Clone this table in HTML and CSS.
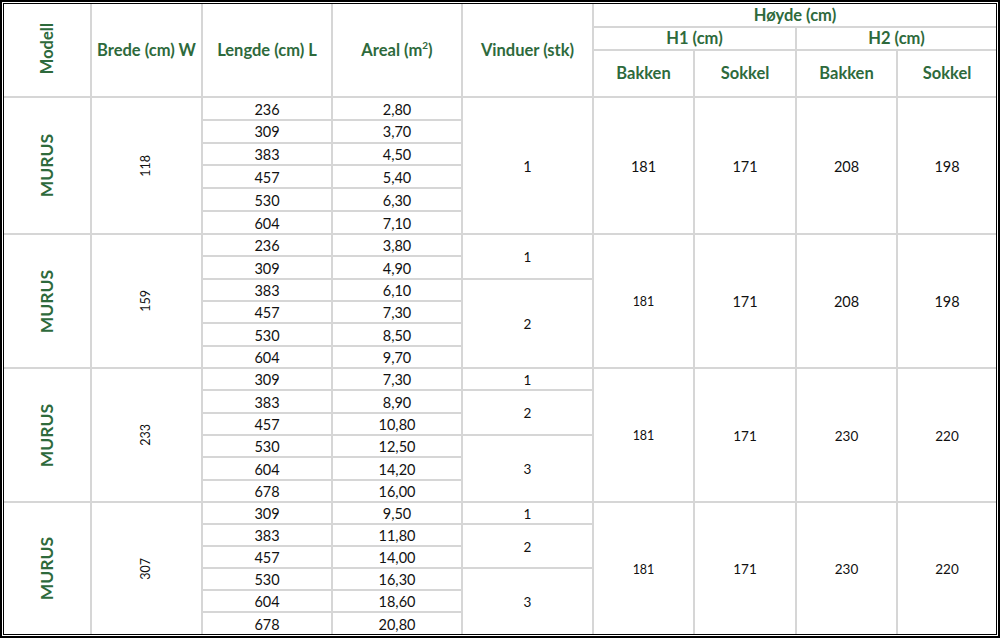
FILE: index.html
```html
<!DOCTYPE html>
<html lang="no">
<head>
<meta charset="utf-8">
<title>MURUS</title>
<link rel="stylesheet" href="styles.css">
</head>
<body>
<div class="frame">
<div class="inner">
<table class="spec">
<colgroup>
<col class="c1"><col class="c2"><col class="c3"><col class="c4"><col class="c5"><col class="c6"><col class="c7"><col class="c8"><col class="c9">
</colgroup>
<thead>
<tr class="hr1">
<th rowspan="3"><span class="rot">Modell</span></th>
<th rowspan="3">Brede (cm) W</th>
<th rowspan="3">Lengde (cm) L</th>
<th rowspan="3">Areal (m<sup>2</sup>)</th>
<th rowspan="3">Vinduer (stk)</th>
<th colspan="4">Høyde (cm)</th>
</tr>
<tr class="hr2">
<th colspan="2">H1 (cm)</th>
<th colspan="2">H2 (cm)</th>
</tr>
<tr class="hr3">
<th>Bakken</th><th>Sokkel</th><th>Bakken</th><th>Sokkel</th>
</tr>
</thead>
<tbody class="g1">
<tr>
<td rowspan="6" class="model"><span class="rot">MURUS</span></td>
<td rowspan="6" class="sm"><span class="rot">118</span></td>
<td>236</td><td>2,80</td>
<td rowspan="6">1</td>
<td rowspan="6">181</td><td rowspan="6">171</td><td rowspan="6">208</td><td rowspan="6">198</td>
</tr>
<tr><td>309</td><td>3,70</td></tr>
<tr><td>383</td><td>4,50</td></tr>
<tr><td>457</td><td>5,40</td></tr>
<tr><td>530</td><td>6,30</td></tr>
<tr><td>604</td><td>7,10</td></tr>
</tbody>
<tbody class="g2">
<tr>
<td rowspan="6" class="model"><span class="rot">MURUS</span></td>
<td rowspan="6" class="sm"><span class="rot">159</span></td>
<td>236</td><td>3,80</td>
<td rowspan="2" class="md">1</td>
<td rowspan="6" class="sm">181</td><td rowspan="6">171</td><td rowspan="6">208</td><td rowspan="6">198</td>
</tr>
<tr><td>309</td><td>4,90</td></tr>
<tr><td>383</td><td>6,10</td><td rowspan="4" class="md">2</td></tr>
<tr><td>457</td><td>7,30</td></tr>
<tr><td>530</td><td>8,50</td></tr>
<tr><td>604</td><td>9,70</td></tr>
</tbody>
<tbody class="g3">
<tr>
<td rowspan="6" class="model"><span class="rot">MURUS</span></td>
<td rowspan="6" class="sm"><span class="rot">233</span></td>
<td>309</td><td>7,30</td>
<td class="md">1</td>
<td rowspan="6" class="sm">181</td><td rowspan="6" class="md">171</td><td rowspan="6" class="md">230</td><td rowspan="6" class="md">220</td>
</tr>
<tr><td>383</td><td>8,90</td><td rowspan="2" class="md">2</td></tr>
<tr><td>457</td><td>10,80</td></tr>
<tr><td>530</td><td>12,50</td><td rowspan="3" class="md">3</td></tr>
<tr><td>604</td><td>14,20</td></tr>
<tr><td>678</td><td>16,00</td></tr>
</tbody>
<tbody class="g4">
<tr>
<td rowspan="6" class="model"><span class="rot">MURUS</span></td>
<td rowspan="6" class="sm"><span class="rot">307</span></td>
<td>309</td><td>9,50</td>
<td class="md">1</td>
<td rowspan="6" class="sm">181</td><td rowspan="6" class="md">171</td><td rowspan="6" class="md">230</td><td rowspan="6" class="md">220</td>
</tr>
<tr><td>383</td><td>11,80</td><td rowspan="2" class="md">2</td></tr>
<tr><td>457</td><td>14,00</td></tr>
<tr><td>530</td><td>16,30</td><td rowspan="3" class="md">3</td></tr>
<tr><td>604</td><td>18,60</td></tr>
<tr><td>678</td><td>20,80</td></tr>
</tbody>
</table>
</div>
</div>
</body>
</html>
```
FILE: styles.css
```css
html, body {
  margin: 0;
  padding: 0;
  background: #fff;
}

.frame {
  width: 1000px;
  height: 638px;
  box-sizing: border-box;
  border: 2px solid #000;
  padding: 1px;
}

.inner {
  border: 1px solid #000;
  height: 630px;
}

.spec {
  width: 992px;
  height: 630px;
  table-layout: fixed;
  border-collapse: collapse;
  border-style: hidden;
  font-family: Lato, "Open Sans", sans-serif;
  color: #111;
}

.c1 { width: 87px; }
.c2 { width: 111px; }
.c3 { width: 130px; }
.c4 { width: 130px; }
.c5 { width: 131px; }
.c6 { width: 101px; }
.c7 { width: 102px; }
.c8 { width: 101px; }
.c9 { width: 99px; }

.spec th,
.spec td {
  border: 2px solid #d6d6d6;
  padding: 0;
  text-align: center;
  vertical-align: middle;
  line-height: 1;
  overflow: hidden;
}

.spec th {
  color: #2e6a3c;
  font-weight: 700;
  font-size: 16.5px;
}

.spec th sup {
  font-size: 10px;
  line-height: 0;
  vertical-align: 7px;
}

.hr1 { height: 23px; }
.hr2 { height: 23px; }
.hr3 { height: 47px; }

.g1 tr { height: 22.83px; }
.g2 tr { height: 22.33px; }
.g3 tr { height: 22.33px; }
.g4 tr { height: 22px; }

.spec td {
  font-size: 14.5px;
  padding-top: 3px;
}

.spec td.md {
  font-size: 13.5px;
}

.spec td.sm {
  font-size: 12.5px;
}

.spec td.model {
  color: #2e6a3c;
  font-weight: 700;
  font-size: 17.5px;
}

.rot {
  display: inline-block;
  writing-mode: vertical-rl;
  transform: rotate(180deg);
}
```
